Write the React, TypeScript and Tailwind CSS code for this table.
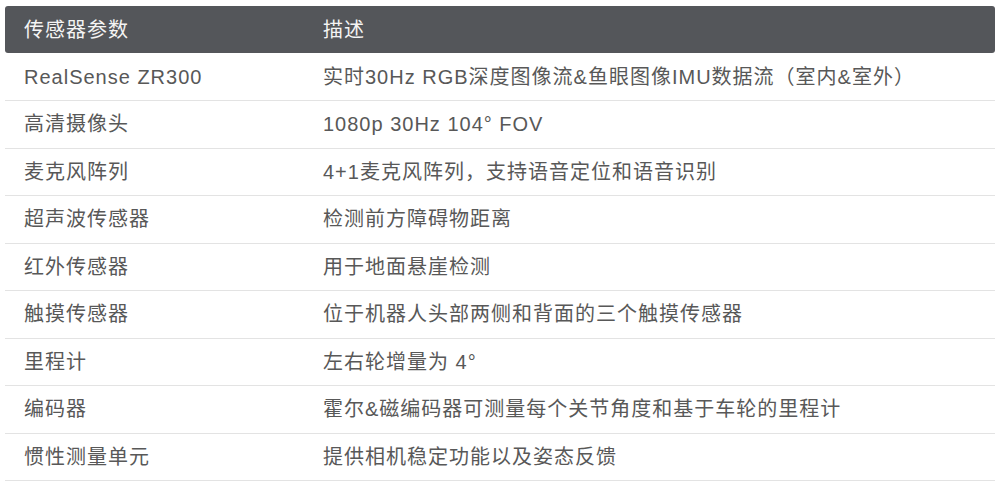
const ROWS: [string, string][] = [
  ['RealSense ZR300', '实时30Hz RGB深度图像流&鱼眼图像IMU数据流（室内&室外）'],
  ['高清摄像头', '1080p 30Hz 104° FOV'],
  ['麦克风阵列', '4+1麦克风阵列，支持语音定位和语音识别'],
  ['超声波传感器', '检测前方障碍物距离'],
  ['红外传感器', '用于地面悬崖检测'],
  ['触摸传感器', '位于机器人头部两侧和背面的三个触摸传感器'],
  ['里程计', '左右轮增量为 4°'],
  ['编码器', '霍尔&磁编码器可测量每个关节角度和基于车轮的里程计'],
  ['惯性测量单元', '提供相机稳定功能以及姿态反馈'],
];

export default function App() {
  return (
    <div
      className="w-[1000px] h-[488px] bg-white px-[5px] pt-[6px]"
      style={{ fontFamily: '"Liberation Sans", "Noto Sans CJK SC", sans-serif' }}
    >
      <table className="w-full border-collapse text-[20px] tracking-[1px] text-[#585858]">
        <thead>
          <tr className="bg-[#54565a] text-[#f4f4f4]">
            <th className="h-[47px] w-[299px] rounded-l-[3px] pl-[19px] text-left font-normal">传感器参数</th>
            <th className="h-[47px] rounded-r-[3px] pl-[19px] text-left font-normal">描述</th>
          </tr>
        </thead>
        <tbody>
          {ROWS.map(([name, desc]) => (
            <tr key={name} className="border-b border-[#e3e3e3]">
              <td className="h-[47.5px] pl-[19px]">{name}</td>
              <td className="h-[47.5px] pl-[19px]">{desc}</td>
            </tr>
          ))}
        </tbody>
      </table>
    </div>
  );
}
